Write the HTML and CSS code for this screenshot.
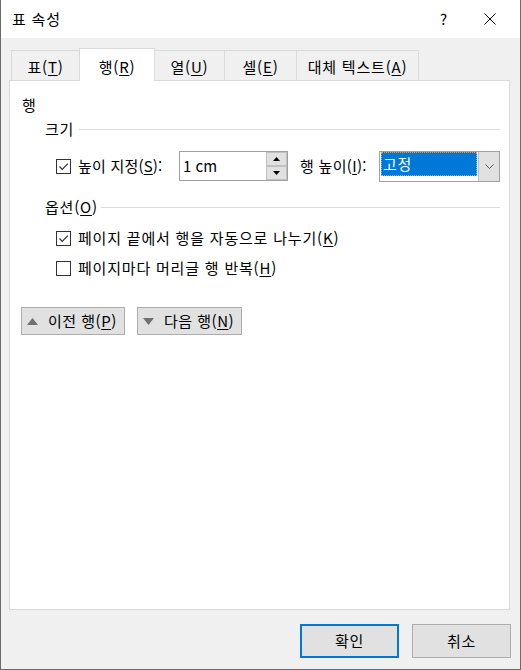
FILE: index.html
```html
<!DOCTYPE html>
<html lang="ko">
  <head>
    <meta charset="UTF-8" />
    <meta name="viewport" content="width=device-width, initial-scale=1.0" />
    <title>표 속성</title>
    <link rel="stylesheet" href="styles.css">
  </head>
  <body>
    <div class="window">
      <!-- 제목 표시줄 -->
      <div class="titlebar">
        <span class="title">표 속성</span>
        <span class="caption-btn">?</span>
        <span class="caption-btn">
          <svg width="12" height="12" viewBox="0 0 12 12">
            <path d="M0.5 0.5 L11.5 11.5 M11.5 0.5 L0.5 11.5" stroke="#000" stroke-width="1" fill="none" />
          </svg>
        </span>
      </div>

      <!-- 탭 -->
      <div class="tabs">
        <div class="tab tab-t">표(<u>T</u>)</div>
        <div class="tab tab-r active">행(<u>R</u>)</div>
        <div class="tab tab-u">열(<u>U</u>)</div>
        <div class="tab tab-e">셀(<u>E</u>)</div>
        <div class="tab tab-a">대체 텍스트(<u>A</u>)</div>
      </div>

      <div class="panel">
        <div class="section-title">행</div>

        <div class="group">
          <div class="group-header">크기</div>
          <div class="size-row">
            <label class="check check-size">
              <span class="checkbox checked">
                <svg width="13" height="13" viewBox="0 0 13 13">
                  <path d="M2.5 6.5 L5.3 9.3 L10.8 3.6" stroke="#333" stroke-width="1.2" fill="none" />
                </svg>
              </span>
              <span>높이 지정(<u>S</u>):</span>
            </label>
            <div class="spin-input">
              <span class="spin-value">1 cm</span>
              <span class="spinner">
                <span class="spin-btn">
                  <svg width="7" height="4" viewBox="0 0 7 4"><path d="M0 4 L3.5 0 L7 4 Z" fill="#000" /></svg>
                </span>
                <span class="spin-btn">
                  <svg width="7" height="4" viewBox="0 0 7 4"><path d="M0 0 L7 0 L3.5 4 Z" fill="#000" /></svg>
                </span>
              </span>
            </div>
            <span class="height-label">행 높이(<u>I</u>):</span>
            <div class="select">
              <span class="select-value">고정</span>
              <span class="select-arrow">
                <svg width="9" height="5" viewBox="0 0 9 5"><path d="M0.5 0.5 L4.5 4.5 L8.5 0.5" stroke="#555" stroke-width="1" fill="none" /></svg>
              </span>
            </div>
          </div>
        </div>

        <div class="group group-options">
          <div class="group-header">옵션(<u>O</u>)</div>
          <label class="check check-row">
            <span class="checkbox checked">
              <svg width="13" height="13" viewBox="0 0 13 13">
                <path d="M2.5 6.5 L5.3 9.3 L10.8 3.6" stroke="#333" stroke-width="1.2" fill="none" />
              </svg>
            </span>
            <span>페이지 끝에서 행을 자동으로 나누기(<u>K</u>)</span>
          </label>
          <label class="check check-row">
            <span class="checkbox"></span>
            <span>페이지마다 머리글 행 반복(<u>H</u>)</span>
          </label>
        </div>

        <div class="nav-buttons">
          <button class="nav-btn prev">
            <svg width="11" height="7" viewBox="0 0 11 7"><path d="M0 7 L5.5 0 L11 7 Z" fill="#707070" /></svg>
            <span>이전 행(<u>P</u>)</span>
          </button>
          <button class="nav-btn next">
            <svg width="11" height="7" viewBox="0 0 11 7"><path d="M0 0 L11 0 L5.5 7 Z" fill="#707070" /></svg>
            <span>다음 행(<u>N</u>)</span>
          </button>
        </div>
      </div>

      <!-- 확인 / 취소 -->
      <div class="footer">
        <button class="btn default">확인</button>
        <button class="btn">취소</button>
      </div>
    </div>
  </body>
</html>
```

FILE: styles.css
```css
* {
  box-sizing: border-box;
}

body {
  margin: 0;
  font-family: "Noto Sans CJK KR", "Noto Sans", sans-serif;
  font-size: 15px;
  letter-spacing: 0.8px;
  line-height: 20px;
  color: #000;
  background-color: #fff;
}

u {
  text-decoration: underline;
  text-underline-offset: 2px;
}

.window {
  width: 521px;
  height: 670px;
  border: 1px solid #6b6b6b;
  border-top: none;
  background-color: #f0f0f0;
  display: flex;
  flex-direction: column;
}

.titlebar {
  height: 38px;
  flex-shrink: 0;
  background-color: #fff;
  display: flex;
  align-items: center;
  padding-left: 11px;
  padding-right: 7px;
}
.title {
  flex: 1;
}
.caption-btn {
  width: 46px;
  height: 38px;
  display: flex;
  align-items: center;
  justify-content: center;
}

/* 탭 */
.tabs {
  display: flex;
  align-items: flex-end;
  height: 32px;
  flex-shrink: 0;
  margin: 10px 0 0 10px;
}
.tab {
  height: 30px;
  border: 1px solid #d9d9d9;
  border-bottom: none;
  margin-left: -1px;
  padding-top: 3px;
  display: flex;
  align-items: center;
  justify-content: center;
  background-color: #f0f0f0;
  white-space: nowrap;
}
.tab-t {
  width: 69px;
  margin-left: 0;
}
.tab-r {
  width: 76px;
}
.tab-u {
  width: 71px;
}
.tab-e {
  width: 73px;
}
.tab-a {
  width: 123px;
}
.tab.active {
  height: 33px;
  padding-top: 4px;
  margin-bottom: -1px;
  background-color: #fff;
  position: relative;
  z-index: 1;
}

.panel {
  width: 501px;
  height: 530px;
  flex-shrink: 0;
  margin-left: 8px;
  background-color: #fff;
  border: 1px solid #d9d9d9;
  padding: 14px 9px 0 12px;
}

.group {
  margin-top: 4px;
  padding-left: 23px;
}
.group-options {
  margin-top: 15px;
}
.group-header {
  display: flex;
  align-items: center;
  height: 20px;
}
.group-header::after {
  content: "";
  flex: 1;
  height: 1px;
  background-color: #dcdcdc;
  margin-left: 5px;
}
.group-options .group-header::after {
  margin-left: 3px;
}

.check {
  display: flex;
  align-items: center;
  gap: 7px;
}
.checkbox {
  width: 15px;
  height: 15px;
  border: 1px solid #333;
  background-color: #fff;
  display: flex;
  align-items: center;
  justify-content: center;
  flex-shrink: 0;
}

.size-row {
  display: flex;
  align-items: flex-start;
  margin-top: 12px;
  padding-left: 11px;
  height: 31px;
}
.check-size {
  width: 123px;
  height: 30px;
  flex-shrink: 0;
  white-space: nowrap;
  letter-spacing: 0.2px;
}

.spin-input {
  width: 109px;
  height: 30px;
  border: 1px solid #a0a0a0;
  background-color: #fff;
  display: flex;
  align-items: center;
  padding-left: 3px;
}
.spin-value {
  flex: 1;
  letter-spacing: 0;
}
.spinner {
  width: 21px;
  height: 28px;
  display: flex;
  flex-direction: column;
}
.spin-btn {
  flex: 1;
  background-color: #e1e1e1;
  border: 1px solid #c0c0c0;
  display: flex;
  align-items: center;
  justify-content: center;
}

.height-label {
  width: 79px;
  margin-left: 12px;
  height: 30px;
  display: flex;
  align-items: center;
  white-space: nowrap;
  letter-spacing: 0.3px;
}

.select {
  width: 121px;
  height: 31px;
  border: 1px solid #a0a0a0;
  background-color: #fff;
  display: flex;
}
.select-value {
  width: 96px;
  height: 24px;
  margin: 0 0 0 1px;
  background-color: #0078d7;
  color: #fff;
  outline: 1px dotted #f0a040;
  outline-offset: -1px;
  padding-left: 2px;
  display: flex;
  align-items: center;
}
.select-arrow {
  margin-left: auto;
  width: 21px;
  background-color: #e1e1e1;
  border-left: 1px solid #c0c0c0;
  display: flex;
  align-items: center;
  justify-content: center;
}

.check-row {
  height: 20px;
  padding-left: 11px;
  margin-top: 11px;
  white-space: nowrap;
}
.check-row + .check-row {
  margin-top: 10px;
}

.nav-buttons {
  display: flex;
  gap: 12px;
  margin: 29px 0 0 -1px;
}
.nav-btn {
  height: 28px;
  background-color: #e1e1e1;
  border: 1px solid #adadad;
  font: inherit;
  letter-spacing: 0.5px;
  color: #000;
  display: flex;
  align-items: center;
  gap: 10px;
  padding: 0 0 0 5px;
  white-space: nowrap;
}
.nav-btn.prev {
  width: 104px;
}
.nav-btn.next {
  width: 105px;
}

.footer {
  flex: 1;
  display: flex;
  justify-content: flex-end;
  align-items: flex-start;
  gap: 13px;
  padding: 14px 9px 0 0;
}
.btn {
  width: 99px;
  height: 34px;
  background-color: #e1e1e1;
  border: 1px solid #adadad;
  font: inherit;
  letter-spacing: inherit;
  color: #000;
  padding: 0;
}
.btn.default {
  border: 2px solid #0078d7;
}
```
